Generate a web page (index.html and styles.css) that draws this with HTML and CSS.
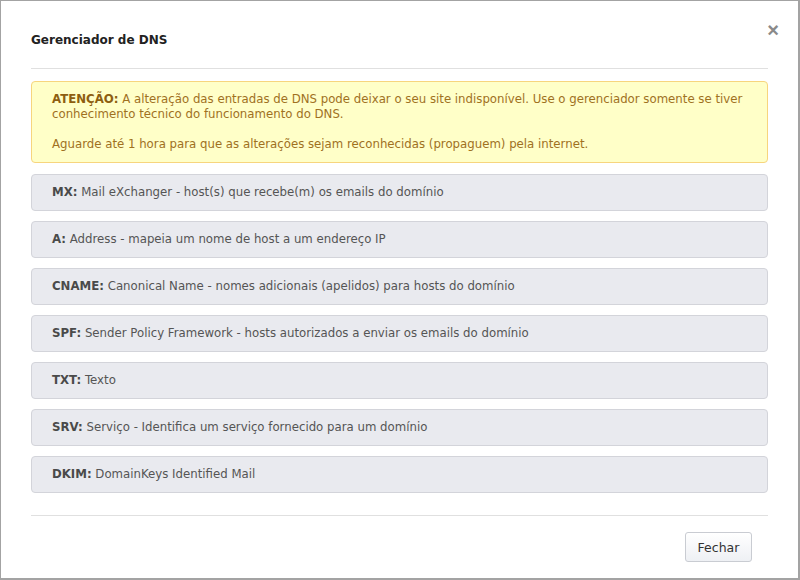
FILE: index.html
```html
<!DOCTYPE html>
<html>
<head>
    <title>Gerenciador de DNS</title>
    <link rel="stylesheet" href="styles.css">
</head>
<body>

<div class="modal">
  <div class="modal-header">
    <h4 class="modal-title">Gerenciador de DNS</h4>
    <button class="close" type="button">&times;</button>
  </div>

  <div class="modal-body">
    <div class="alert">
      <p><strong>ATENÇÃO:</strong> A alteração das entradas de DNS pode deixar o seu site indisponível. Use o gerenciador somente se tiver conhecimento técnico do funcionamento do DNS.</p>
      <p>Aguarde até 1 hora para que as alterações sejam reconhecidas (propaguem) pela internet.</p>
    </div>

    <div class="panel"><strong>MX:</strong> Mail eXchanger - host(s) que recebe(m) os emails do domínio</div>
    <div class="panel"><strong>A:</strong> Address - mapeia um nome de host a um endereço IP</div>
    <div class="panel"><strong>CNAME:</strong> Canonical Name - nomes adicionais (apelidos) para hosts do domínio</div>
    <div class="panel"><strong>SPF:</strong> Sender Policy Framework - hosts autorizados a enviar os emails do domínio</div>
    <div class="panel"><strong>TXT:</strong> Texto</div>
    <div class="panel"><strong>SRV:</strong> Serviço - Identifica um serviço fornecido para um domínio</div>
    <div class="panel"><strong>DKIM:</strong> DomainKeys Identified Mail</div>
  </div>

  <div class="modal-footer">
    <button class="btn" type="button">Fechar</button>
  </div>
</div>

</body>
</html>
```

FILE: styles.css
```css
body {
    margin: 0;
    padding: 0;
    background-color: #fff;
    font-family: Verdana, "DejaVu Sans", sans-serif;
    font-size: 11.75px;
}

.modal {
    width: 800px;
    height: 580px;
    box-sizing: border-box;
    border: 1px solid #a3a3a3;
    border-right-width: 2px;
    border-bottom-width: 2px;
    padding: 0 30px;
    display: flex;
    flex-direction: column;
}

.modal-header {
    display: flex;
    justify-content: space-between;
    align-items: flex-start;
    border-bottom: 1px solid #e0e0e0;
    height: 67px;
}

.modal-title {
    margin: 32px 0 0 0;
    font-size: 12px;
    font-weight: bold;
    color: #222;
}

.close {
    margin: 19px -11px 0 0;
    padding: 0;
    border: none;
    background: none;
    font-family: Arial, sans-serif;
    font-size: 20px;
    font-weight: bold;
    line-height: 20px;
    color: #8a8a8a;
    cursor: pointer;
}

.modal-body {
    padding-top: 12px;
    display: flex;
    flex-direction: column;
    gap: 10px;
    border-bottom: 1px solid #e0e0e0;
    padding-bottom: 22px;
}

.alert {
    background-color: #ffffc8;
    border: 1px solid #f7d57e;
    border-radius: 4px;
    color: #a0711f;
    padding: 10px 20px;
    margin-bottom: 1px;
    line-height: 15px;
}

.alert p {
    margin: 0;
}

.alert p + p {
    margin-top: 15px;
}

.alert strong {
    color: #8d5e10;
}

.panel {
    background-color: #e9eaef;
    border: 1px solid #d3d4da;
    border-radius: 4px;
    color: #555;
    height: 35px;
    line-height: 35px;
    padding: 0 20px;
}

.panel strong {
    color: #4a4a4a;
}

.modal-footer {
    display: flex;
    justify-content: flex-end;
    padding-top: 16px;
}

.btn {
    margin-right: 16px;
    width: 67px;
    height: 30px;
    border: 1px solid #c9ccd2;
    border-radius: 3px;
    background: linear-gradient(#ffffff, #eef0f4);
    font-family: "Segoe UI", "DejaVu Sans", sans-serif;
    font-size: 12.5px;
    color: #333;
    cursor: pointer;
}
```
